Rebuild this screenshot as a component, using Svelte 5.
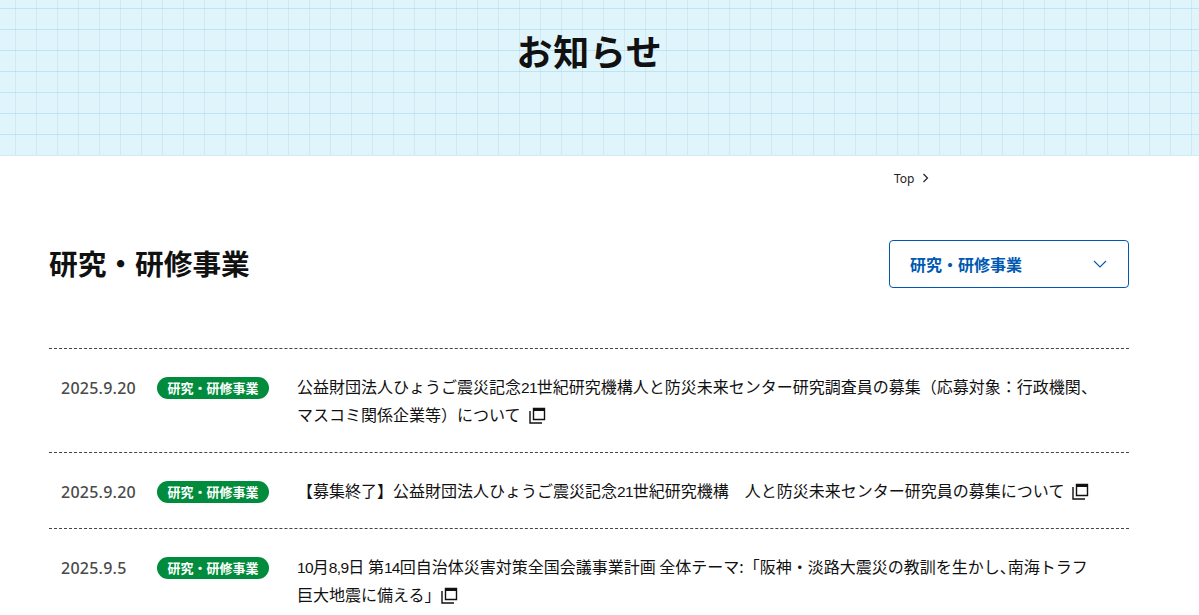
<script>
  const items = [
    { date: '2025.9.20', title: '公益財団法人ひょうご震災記念21世紀研究機構人と防災未来センター研究調査員の募集（応募対象：行政機関、マスコミ関係企業等）について' },
    { date: '2025.9.20', title: '【募集終了】公益財団法人ひょうご震災記念21世紀研究機構　人と防災未来センター研究員の募集について' },
    { date: '2025.9.5', title: '10月8,9日 第14回自治体災害対策全国会議事業計画 全体テーマ:「阪神・淡路大震災の教訓を生かし、南海トラフ巨大地震に備える」' }
  ];
  const parts = (t) => t.split(/([0-9,]+|、|」)/);
</script>

<div class="page">
  <header class="hero"><h1>お知らせ</h1></header>
  <nav class="crumbs">
    <span>Top</span>
    <svg width="7" height="10" viewBox="0 0 7 10"><path d="M1.5 1 L5.5 5 L1.5 9" fill="none" stroke="#222" stroke-width="1.2"/></svg>
  </nav>
  <main class="content">
    <div class="head">
      <h2>研究・研修事業</h2>
      <button class="select">
        <span>研究・研修事業</span>
        <svg width="14" height="8" viewBox="0 0 14 8"><path d="M1 1 L7 7 L13 1" fill="none" stroke="#0058b0" stroke-width="1.1"/></svg>
      </button>
    </div>
    <ul class="list">
      {#each items as item}
        <li class="row">
          <span class="date">{item.date}</span>
          <span class="tag">研究・研修事業</span>
          <a class="title" href="#top">{#each parts(item.title) as p, i}{#if p === '、' || p === '」'}<span class="ten">{p}</span>{:else if i % 2}<span class="num">{p}</span>{:else}{p}{/if}{/each}<svg class="ext" width="17" height="17" viewBox="0 0 17 17"><path d="M4.5 1.5 H15.5 V12.5 H4.5 Z" fill="none" stroke="#111" stroke-width="1.4"/><path d="M4 1 H16 V4 H4 Z" fill="#111"/><path d="M1 4 V16 H13" fill="none" stroke="#111" stroke-width="1.4"/></svg></a>
        </li>
      {/each}
    </ul>
  </main>
</div>

<style>
  :global(body) {
    margin: 0;
    background: #fff;
    overflow: hidden;
  }
  .page {
    font-family: "Noto Sans CJK JP", "Noto Sans", sans-serif;
    color: #111;
    height: 615px;
    overflow: hidden;
  }
  .hero {
    height: 155px;
    border-bottom: 1px solid #d3ebf3;
    box-sizing: content-box;
    background-color: #e0f4fc;
    background-image:
      linear-gradient(to right, rgba(120, 185, 205, 0.18) 1px, transparent 1px),
      linear-gradient(to bottom, rgba(110, 195, 225, 0.3) 1px, transparent 1px);
    background-size: 21px 21px;
    background-position: 15px 8px;
    display: flex;
    justify-content: center;
    padding-right: 20px;
  }
  h1 {
    margin: 24px 0 0;
    font-size: 36px;
    line-height: 52px;
    font-weight: 700;
    letter-spacing: 0.02em;
    height: 52px;
    color: #111;
  }
  .crumbs {
    display: flex;
    align-items: center;
    gap: 8px;
    height: 44px;
    padding-left: 894px;
    font-family: "Noto Sans", sans-serif;
    font-size: 12px;
    color: #222;
  }
  .content {
    margin: 0 70px 0 49px;
  }
  .head {
    display: flex;
    justify-content: space-between;
    align-items: center;
    margin-top: 40px;
    height: 48px;
    margin-bottom: 60px;
  }
  h2 {
    margin: 0 0 2px;
    font-size: 28.7px;
    font-weight: 700;
    line-height: 46px;
  }
  .select {
    width: 240px;
    height: 48px;
    box-sizing: border-box;
    border: 1px solid #0058b0;
    border-radius: 4px;
    background: #fff;
    color: #0058b0;
    font: inherit;
    font-size: 16px;
    font-weight: 700;
    display: flex;
    align-items: center;
    justify-content: space-between;
    padding: 0 21px 0 20px;
  }
  .list {
    list-style: none;
    margin: 0;
    padding: 0;
  }
  .row {
    display: flex;
    align-items: flex-start;
    border-top: 1px dashed #444;
    padding: 23px 0 24px 12px;
  }
  .date {
    width: 96px;
    flex: none;
    margin-top: 4px;
    font-family: "Noto Sans", sans-serif;
    font-size: 16px;
    line-height: 24px;
    letter-spacing: 0.015em;
    color: #4a4a4a;
    font-weight: 500;
  }
  .tag {
    flex: none;
    width: 112px;
    height: 22px;
    margin-top: 5px;
    border-radius: 11px;
    background: #008c3c;
    color: #fff;
    font-size: 13px;
    font-weight: 700;
    line-height: 22px;
    text-align: center;
  }
  .title {
    margin-left: 28px;
    width: 800px;
    font-size: 16px;
    line-height: 28px;
    color: #111;
    text-decoration: none;
  }
  .num {
    font-family: "Liberation Sans Narrow", "Liberation Sans", sans-serif;
    font-size: 15.5px;
    letter-spacing: -0.7px;
    line-height: 0;
  }
  .ten {
    font-feature-settings: "halt";
  }
  .ext {
    vertical-align: -3px;
    margin-left: 8px;
  }
</style>
